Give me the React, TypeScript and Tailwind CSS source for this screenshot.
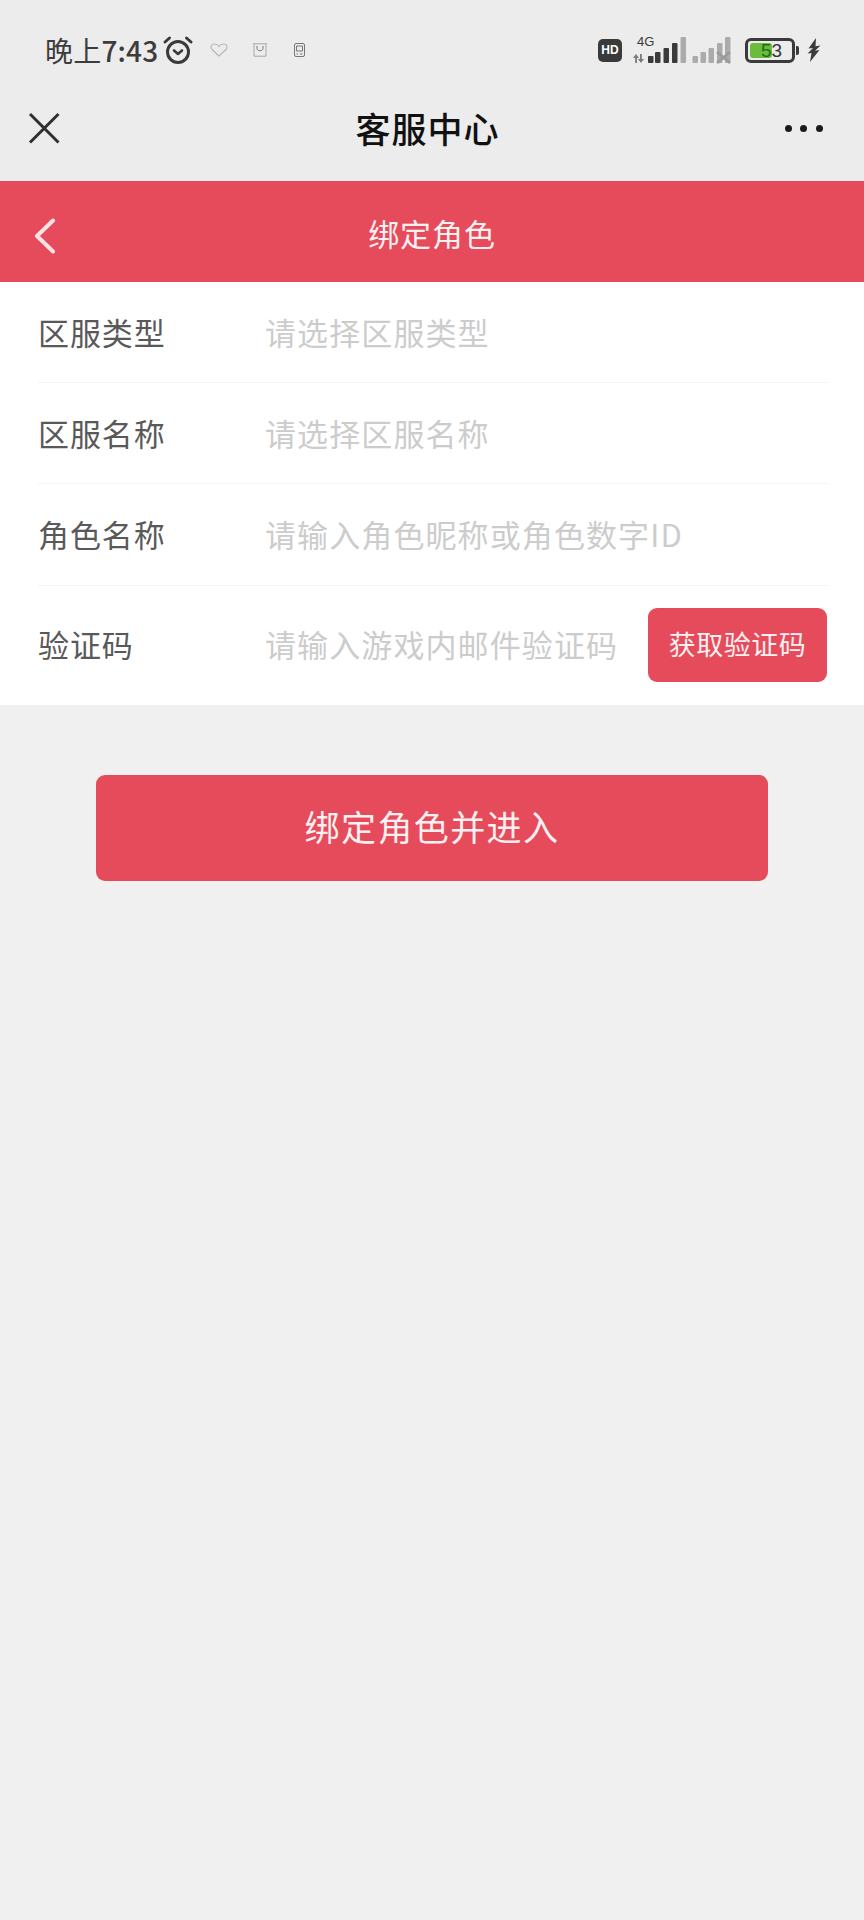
const FONT = "font-['Noto_Sans_CJK_SC','Noto_Sans',sans-serif]";

function Alarm() {
  return (
    <svg width="32" height="30" viewBox="0 0 32 30" fill="none" stroke="#3a3a3a" strokeLinecap="round" strokeLinejoin="round">
      <circle cx="16" cy="17" r="10.5" strokeWidth="3" />
      <path d="M12 15.5l4 3.5 4-3.5" strokeWidth="2.6" />
      <path d="M3 7L7.5 3M29 7L24.5 3" strokeWidth="3" />
    </svg>
  );
}

function Heart() {
  return (
    <svg width="18" height="14" viewBox="0 0 18 14" fill="none" stroke="#b5b5b5" strokeWidth="1.1">
      <path d="M9 13L2 6.5C0 4 1.3 1 4.4 1 6.5 1 8 2 9 3.5 10 2 11.5 1 13.6 1 16.7 1 18 4 16 6.5z" />
    </svg>
  );
}

function Shop() {
  return (
    <svg width="16" height="14" viewBox="0 0 16 14" fill="none" stroke="#9a9a9a" strokeWidth="1">
      <path d="M1 .8h14M2 .8v12.4h12V.8" stroke="#a8a8a8" />
      <path d="M5 3v2.5c0 3 6 3 6 0V3" stroke="#777" />
    </svg>
  );
}

function Tablet() {
  return (
    <svg width="11" height="14" viewBox="0 0 11 14" fill="none" stroke="#777" strokeWidth="1">
      <rect x=".5" y=".5" width="10" height="13" rx="1.5" />
      <path d="M2.5 3h6v5h-6zM2.5 11h1.5M6 11h2.5" />
    </svg>
  );
}

function Signal() {
  const dark = [
    [15, 20, 5.5],
    [22, 16, 5.5],
    [30.5, 12, 5.5],
    [39, 7, 5.5],
  ];
  const grey = [
    [47.5, 1, 5.5],
    [59.5, 20, 5.5],
    [67.5, 16, 5.5],
    [75.5, 12, 5.5],
    [84, 7, 5.5],
    [92, 1, 5.5],
  ];
  return (
    <svg width="100" height="28" viewBox="0 0 100 28">
      <path d="M3 18l3 4H4v5H2.2v-5H0zM7 18h1.8v5H11l-3 4-3-4h2z" fill="#7a7a7a" />
      {dark.map(([x, y, w]) => (
        <rect key={x} x={x} y={y} width={w} height={27 - y} rx="1" fill="#3a3a3a" />
      ))}
      {grey.map(([x, y, w]) => (
        <rect key={x} x={x} y={y} width={w} height={27 - y} rx="1" fill="#ababab" />
      ))}
      <path d="M84 16l13 11M97 16l-13 11" stroke="#9b9b9b" strokeWidth="2.8" />
    </svg>
  );
}

function Bolt() {
  return (
    <svg width="14" height="24" viewBox="0 0 14 24" fill="#3a3a3a">
      <path d="M9 0L1.5 10.5 6 10 .5 15.5 4.5 15 3 24 12.5 12 8 12.8 13.5 7.5 8.5 8.3z" />
    </svg>
  );
}

function Close() {
  return (
    <svg width="32" height="32" viewBox="0 0 32 32" fill="none" stroke="#2f2f2f" strokeWidth="3">
      <path d="M2 2l28.5 28.5M30.5 2L2 30.5" />
    </svg>
  );
}

function Back() {
  return (
    <svg width="22" height="36" viewBox="0 0 22 36" fill="none" stroke="#fbe3e5" strokeWidth="4" strokeLinecap="round" strokeLinejoin="round">
      <path d="M19 2.5L3 18l16 15.5" />
    </svg>
  );
}

function Row({
  label,
  placeholder,
  children,
  tall,
  last,
}: {
  label: string;
  placeholder: string;
  children?: React.ReactNode;
  tall?: boolean;
  last?: boolean;
}) {
  const rowSize = last
    ? "h-[119px] pb-[2px]"
    : tall
      ? "h-[102px] border-b border-[#f3f3f3]"
      : "h-[101px] border-b border-[#f3f3f3]";
  return (
    <div className={`flex items-center ${rowSize}`}>
      <div className="w-[227px] shrink-0 text-[#595959] text-[31px] tracking-[0.9px]">{label}</div>
      <div className="flex-1 whitespace-nowrap text-[#cccccc] text-[31px] tracking-[1.1px]">{placeholder}</div>
      {children}
    </div>
  );
}

export default function App() {
  return (
    <div className={`${FONT} w-[864px] h-[1920px] bg-[#f0f0f0] overflow-hidden`}>
      <header className="h-[181px] bg-[#ececec]">
        <div className="h-[97px] pt-[3px] flex items-center pl-[45px] pr-[43px]">
          <span className="text-[28px] text-[#3c3c3c] tracking-[0.2px] w-[117px] whitespace-nowrap">
            晚上<span className="font-medium">7:43</span>
          </span>
          <Alarm />
          <span className="w-[16px]" />
          <Heart />
          <span className="w-[24px]" />
          <Shop />
          <span className="w-[26px]" />
          <Tablet />
          <span className="flex-1" />
          <span className="w-[24px] h-[23px] rounded-[5px] bg-[#3a3a3a] text-white text-[12px] font-bold flex items-center justify-center font-['Liberation_Sans',sans-serif]">
            HD
          </span>
          <span className="relative ml-[11px] w-[100px] h-[28px]">
            <Signal />
            <span className="absolute left-[4px] top-[-1px] text-[13px] leading-[13px] text-[#3a3a3a] font-['Liberation_Sans',sans-serif]">
              4G
            </span>
          </span>
          <span className="relative ml-[12px] w-[50px] h-[25px] rounded-[6px] border-[3px] border-[#3a3a3a] flex items-center overflow-hidden">
            <span className="absolute left-[2px] top-[2px] bottom-[2px] w-[22px] rounded-[3px] bg-[#6cbc3c]" />
            <span className="relative ml-[13px] text-[19px] leading-none text-[#333333] font-['Liberation_Sans',sans-serif]">
              <span className="text-[#1f6b1f]">5</span>3
            </span>
          </span>
          <span className="ml-[1px] w-[3px] h-[9px] bg-[#3a3a3a] rounded-r-[2px]" />
          <span className="ml-[8px] flex">
            <Bolt />
          </span>
        </div>
        <div className="h-[62px] flex items-center justify-between pl-[28px] pr-[41px]">
          <Close />
          <span className="ml-[10px] text-[35px] font-medium text-[#111111] tracking-[1px]">客服中心</span>
          <span className="flex gap-[8.5px]">
            <span className="w-[7px] h-[7px] rounded-full bg-[#1a1a1a]" />
            <span className="w-[7px] h-[7px] rounded-full bg-[#1a1a1a]" />
            <span className="w-[7px] h-[7px] rounded-full bg-[#1a1a1a]" />
          </span>
        </div>
      </header>

      <div className="relative h-[101px] pt-[4px] bg-[#e64b5c] flex items-center justify-center">
        <span className="absolute left-[34px] top-[37px] flex">
          <Back />
        </span>
        <span className="text-[31px] text-[#fdf0f1] tracking-[0.9px]">绑定角色</span>
      </div>

      <div className="bg-white h-[423px] pl-[38px] pr-[37px]">
        <Row label="区服类型" placeholder="请选择区服类型" />
        <Row label="区服名称" placeholder="请选择区服名称" />
        <Row label="角色名称" placeholder="请输入角色昵称或角色数字ID" tall />
        <Row label="验证码" placeholder="请输入游戏内邮件验证码" last>
          <button className="w-[179px] h-[74px] shrink-0 rounded-[9px] bg-[#e64b5c] text-[#fdf0f1] text-[27px] tracking-[0.5px]">
            获取验证码
          </button>
        </Row>
      </div>

      <div className="px-[96px] pt-[70px]">
        <button className="w-full h-[106px] pb-[4px] rounded-[9px] bg-[#e64b5c] text-[#fdf0f1] text-[35px] tracking-[1.4px]">
          绑定角色并进入
        </button>
      </div>
    </div>
  );
}
